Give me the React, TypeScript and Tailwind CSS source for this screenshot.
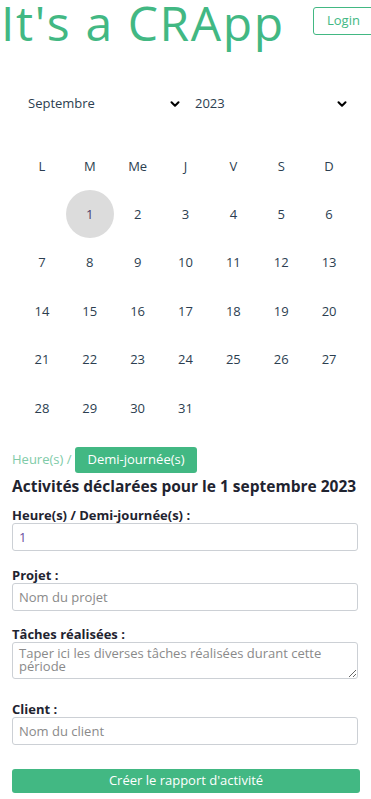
import { ChevronDown } from "lucide-react";

const jours = ["L", "M", "Me", "J", "V", "S", "D"];

const App = () => {
    // une case vide avant le 1, puis les 31 jours
    const cases: (number | null)[] = [null];
    for (let i = 1; i <= 31; i++) cases.push(i);

    return (
        <main
            className="min-h-screen bg-white overflow-x-hidden text-[#2c3e50]"
            style={{ fontFamily: '"Open Sans", "Noto Sans", sans-serif' }}
        >
            <header className="flex items-start justify-between pl-[1px] whitespace-nowrap">
                <h1 className="shrink-0 text-[48px] leading-[46px] font-normal text-[#42b883] tracking-[1.6px]">It's a CRApp</h1>
                <button className="mt-[7px] mr-[-10px] h-[28px] w-[68px] shrink-0 border border-[#42b883] rounded-[3px] text-[13px] text-[#42b883] text-left pl-[13px]">
                    Login
                </button>
            </header>

            <div className="flex mt-[46px] px-[20px] gap-[4px]">
                <div className="flex-1 flex items-center justify-between pl-[8px] pr-[1px] h-[24px] text-[13px]">
                    <span>Septembre</span>
                    <ChevronDown size={14} strokeWidth={3.5} className="text-black" />
                </div>
                <div className="flex-1 flex items-center justify-between pl-[8px] pr-[2px] h-[24px] text-[13px]">
                    <span>2023</span>
                    <ChevronDown size={14} strokeWidth={3.5} className="text-black" />
                </div>
            </div>

            <div className="grid grid-cols-7 mx-[18px] mt-[28px] text-[13px]">
                {jours.map((j) => (
                    <div key={j} className="h-[46px] flex items-center justify-center">{j}</div>
                ))}
                {cases.map((c, idx) => (
                    <div key={idx} className="h-[48.5px] flex items-center justify-center">
                        {c === 1 ? (
                            <span className="w-[48px] h-[48px] rounded-full bg-[#dcdcdc] flex items-center justify-center text-[#4a3a6a]">1</span>
                        ) : (
                            <span>{c ?? ""}</span>
                        )}
                    </div>
                ))}
            </div>

            <div className="px-[12px] mt-[14px]">
                <div className="flex items-center gap-[4px] text-[13px]">
                    <span className="text-[#80cba8]">Heure(s) /</span>
                    <button className="h-[26px] px-[12px] rounded-[3px] bg-[#42b883] text-white text-[13px]">Demi-journée(s)</button>
                </div>
                <h2 className="mt-[3px] text-[15.5px] leading-[20px] font-bold text-[#1f2430] whitespace-nowrap">
                    Activités déclarées pour le 1 septembre 2023
                </h2>

                <form className="mt-[11px] flex flex-col text-[13px]">
                    <label className="font-bold text-[#1f2430] leading-[16px]">Heure(s) / Demi-journée(s) :</label>
                    <input
                        defaultValue="1"
                        className="h-[28px] w-[346px] border border-[#ccd0d5] rounded-[3px] px-[6px] text-[#6b4fa0] outline-none"
                    />

                    <label className="mt-[16px] font-bold text-[#1f2430] leading-[16px]">Projet :</label>
                    <input
                        placeholder="Nom du projet"
                        className="h-[28px] w-[346px] border border-[#ccd0d5] rounded-[3px] px-[6px] placeholder:text-[#8a8a8a] outline-none"
                    />

                    <label className="mt-[15px] font-bold text-[#1f2430] leading-[16px]">Tâches réalisées :</label>
                    <textarea
                        placeholder="Taper ici les diverses tâches réalisées durant cette période"
                        className="h-[37px] w-[346px] border border-[#ccd0d5] rounded-[3px] px-[6px] py-[4px] leading-[13px] placeholder:text-[#8a8a8a] outline-none"
                    />

                    <label className="mt-[22px] font-bold text-[#1f2430] leading-[16px]">Client :</label>
                    <input
                        placeholder="Nom du client"
                        className="h-[28px] w-[346px] border border-[#ccd0d5] rounded-[3px] px-[6px] placeholder:text-[#8a8a8a] outline-none"
                    />

                    <button
                        type="button"
                        className="mt-[24px] h-[24px] w-[348px] rounded-[3px] bg-[#42b883] text-white text-[13px]"
                    >
                        Créer le rapport d'activité
                    </button>
                </form>
            </div>
        </main>
    );
};

export default App;
